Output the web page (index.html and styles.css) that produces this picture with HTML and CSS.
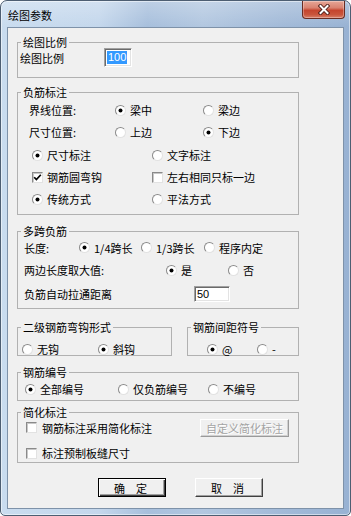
FILE: index.html
```html
<!DOCTYPE html>
<html lang="zh-CN">
<head>
<meta charset="utf-8">
<title>绘图参数</title>
<link rel="stylesheet" href="styles.css">
</head>
<body>
<div class="window">
  <div class="titlebar">
    <span class="title">绘图参数</span>
    <span class="close" aria-label="关闭">
      <svg width="12" height="11" viewBox="0 0 12 11"><path d="M2.5 2 L9.5 9 M9.5 2 L2.5 9" fill="none" stroke="#4a1c17" stroke-width="3.8" stroke-linecap="square"/><path d="M2.5 2 L9.5 9 M9.5 2 L2.5 9" fill="none" stroke="#ffffff" stroke-width="2" stroke-linecap="square"/></svg>
    </span>
  </div>
  <div class="client">
    <fieldset class="grp g1">
      <legend>绘图比例</legend>
      <div class="row cols-scale">
        <span>绘图比例</span>
        <span class="edit e-scale"><span class="sel">100</span></span>
      </div>
    </fieldset>

    <fieldset class="grp g2">
      <legend>负筋标注</legend>
      <div class="row cols-pos">
        <span>界线位置:</span>
        <label class="opt"><i class="radio on"></i>梁中</label>
        <label class="opt"><i class="radio"></i>梁边</label>
      </div>
      <div class="row cols-pos">
        <span>尺寸位置:</span>
        <label class="opt"><i class="radio"></i>上边</label>
        <label class="opt"><i class="radio on"></i>下边</label>
      </div>
      <div class="row cols-two first-two">
        <label class="opt"><i class="radio on"></i>尺寸标注</label>
        <label class="opt"><i class="radio"></i>文字标注</label>
      </div>
      <div class="row cols-two">
        <label class="opt"><i class="check"><svg width="9" height="9" viewBox="0 0 9 9"><path d="M1.2 4.2 L3.4 6.6 L7.8 1.8" fill="none" stroke="#000" stroke-width="1.7"/></svg></i>钢筋圆弯钩</label>
        <label class="opt"><i class="check"></i>左右相同只标一边</label>
      </div>
      <div class="row cols-two">
        <label class="opt"><i class="radio on"></i>传统方式</label>
        <label class="opt"><i class="radio"></i>平法方式</label>
      </div>
    </fieldset>

    <fieldset class="grp g3">
      <legend>多跨负筋</legend>
      <div class="row cols-len">
        <span>长度:</span>
        <label class="opt"><i class="radio on"></i>1/4跨长</label>
        <label class="opt"><i class="radio"></i>1/3跨长</label>
        <label class="opt"><i class="radio"></i>程序内定</label>
      </div>
      <div class="row cols-max">
        <span>两边长度取大值:</span>
        <label class="opt"><i class="radio on"></i>是</label>
        <label class="opt"><i class="radio"></i>否</label>
      </div>
      <div class="row cols-dist">
        <span>负筋自动拉通距离</span>
        <span class="edit e-dist">50</span>
      </div>
    </fieldset>

    <div class="pair">
      <fieldset class="grp g4a">
        <legend>二级钢筋弯钩形式</legend>
        <div class="row cols-hook">
          <label class="opt"><i class="radio"></i>无钩</label>
          <label class="opt"><i class="radio on"></i>斜钩</label>
        </div>
      </fieldset>
      <fieldset class="grp g4b">
        <legend>钢筋间距符号</legend>
        <div class="row cols-sym">
          <label class="opt"><i class="radio on"></i>@</label>
          <label class="opt"><i class="radio"></i>-</label>
        </div>
      </fieldset>
    </div>

    <fieldset class="grp g5">
      <legend>钢筋编号</legend>
      <div class="row cols-num">
        <label class="opt"><i class="radio on"></i>全部编号</label>
        <label class="opt"><i class="radio"></i>仅负筋编号</label>
        <label class="opt"><i class="radio"></i>不编号</label>
      </div>
    </fieldset>

    <fieldset class="grp g6">
      <legend>简化标注</legend>
      <div class="row cols-simp">
        <label class="opt opt-c"><i class="check"></i>钢筋标注采用简化标注</label>
        <span class="btn disabled">自定义简化标注</span>
      </div>
      <div class="row row-plate">
        <label class="opt opt-c"><i class="check"></i>标注预制板缝尺寸</label>
      </div>
    </fieldset>

    <div class="btns">
      <span class="btn default"><span>确</span><span>定</span></span>
      <span class="btn"><span>取</span><span>消</span></span>
    </div>
  </div>
</div>
</body>
</html>
```

FILE: styles.css
```css
* { box-sizing: border-box; }
html, body { margin: 0; padding: 0; }
body {
  width: 351px;
  height: 516px;
  overflow: hidden;
  background: #ffffff;
  font-family: "Noto Sans CJK SC", "Noto Sans", sans-serif;
  font-size: 11px;
  color: #000;
}

.window {
  width: 351px;
  height: 516px;
  border: 1px solid #4d5e72;
  border-radius: 7px 7px 5px 5px;
  background:
    linear-gradient(to bottom, rgba(255,255,255,0.25) 0px, rgba(255,255,255,0) 26px),
    linear-gradient(to right, #c9dcef 0%, #c4d7ec 28%, #a7bfdc 42%, #b2c7e0 58%, #a2bad8 80%, #98b2d3 100%);
  box-shadow: inset 0 0 0 1px rgba(255,255,255,0.5);
  padding: 0 6px 6px;
  display: flex;
  flex-direction: column;
}

.titlebar {
  height: 26px;
  display: flex;
  align-items: flex-start;
  padding-left: 1px;
}
.title {
  line-height: 14px;
  margin-top: 7px;
  font-size: 11px;
  color: #000;
}
.close {
  margin-left: auto;
  margin-right: -1px;
  width: 43px;
  height: 18px;
  border: 1px solid #6a2c22;
  border-top: none;
  border-radius: 0 0 4px 4px;
  background: linear-gradient(to bottom, #e6a797 0%, #d98270 40%, #c5452e 55%, #c9553c 80%, #d9806a 100%);
  box-shadow: inset 0 0 0 1px rgba(255,255,255,0.3);
  display: flex;
  align-items: center;
  justify-content: center;
}

.client {
  flex: 1;
  background: #f0f0f0;
  border: 1px solid #7e92a9;
  padding: 0 0 0 9px;
}

.grp {
  margin: 0;
  padding: 0;
  min-width: 0;
  border: 1px solid #b1b1b1;
  border-radius: 0;
  width: 282px;
}
.grp legend {
  margin-left: 3px;
  padding: 0 2px;
  font-size: 11px;
  line-height: 12px;
}

.row {
  display: grid;
  align-items: center;
  white-space: nowrap;
}
.opt {
  display: flex;
  align-items: center;
}

.radio, .check {
  display: inline-flex;
  align-items: center;
  justify-content: center;
  flex: none;
  width: 11px;
  height: 11px;
  background: #fff;
  border: 1px solid;
  border-color: #8a8a8a #e2e2e2 #e2e2e2 #8a8a8a;
  margin-right: 4px;
}
.radio { border-radius: 50%; }
.radio.on::after {
  content: "";
  width: 3px;
  height: 3px;
  border-radius: 50%;
  background: #000;
  box-shadow: 0 0 0 0.5px #000;
}
.check {
  box-shadow: inset 1px 1px 0 #c8c8c8;
}

.edit {
  display: flex;
  align-items: center;
  background: #fff;
  border: 1px solid;
  border-color: #a0a0a0 #ffffff #ffffff #a0a0a0;
  box-shadow: inset 1px 1px 0 #6a6a6a, inset -1px -1px 0 #e3e3e3;
  font-family: "Liberation Sans", Arial, sans-serif;
  font-size: 11px;
  padding-left: 2px;
}
.e-scale { width: 28px; height: 19px; }
.sel { background: #3399ff; color: #fff; line-height: 13px; padding: 0 1px; }
.e-dist { width: 36px; height: 16px; }

/* group 1 */
.g1 { margin-top: 8px; }
.cols-scale { grid-template-columns: 84px 28px; height: 19px; padding-left: 2px; }
.g1 .row { margin-bottom: 10px; }

/* group 2 */
.g2 { margin-top: 8px; padding-top: 1px; padding-bottom: 4px; }
.g2 .row { height: 22px; }
.cols-pos { grid-template-columns: 86px 88px auto; padding-left: 11px; }
.cols-two { grid-template-columns: 120px auto; padding-left: 14px; }
.first-two { margin-top: 1px; }

/* group 3 */
.g3 { margin-top: 10px; padding-bottom: 2px; }
.cols-len { grid-template-columns: 55px 62px 63px auto; padding-left: 6px; height: 21px; }
.cols-max { grid-template-columns: 142px 62px auto; padding-left: 6px; height: 24px; }
.cols-dist { grid-template-columns: 170px 36px; padding-left: 6px; height: 24px; }

/* pair */
.pair { display: flex; margin-top: 12px; width: 282px; }
.g4a { width: 155px; }
.g4b { width: 112px; margin-left: 15px; }
.pair .row { height: 14px; margin-top: 8px; }
.cols-hook { grid-template-columns: 76px auto; padding-left: 4px; }
.cols-sym { grid-template-columns: 50px auto; padding-left: 19px; }

/* group 5 */
.g5 { margin-top: 10px; padding-top: 3px; padding-bottom: 5px; }
.g5 .row { height: 14px; }
.cols-num { grid-template-columns: 93px 90px auto; padding-left: 7px; }

/* group 6 */
.g6 { margin-top: 5px; padding-bottom: 3px; }
.cols-simp { grid-template-columns: 174px 89px; height: 19px; padding-left: 8px; }
.row-plate { height: 14px; margin-top: 8px; padding-left: 8px; }
.opt-c .check { margin-right: 5px; }

/* buttons */
.btn {
  display: inline-flex;
  align-items: center;
  justify-content: center;
  background: #f0f0f0;
  border: 1px solid;
  border-color: #ffffff #404040 #404040 #ffffff;
  box-shadow: inset -1px -1px 0 #a0a0a0;
  font-size: 11px;
}
.btn.disabled {
  height: 18px;
  width: 89px;
  margin-top: 1px;
  color: #a3a3a3;
  border-color: #ffffff #9a9a9a #9a9a9a #ffffff;
  box-shadow: inset -1px -1px 0 #d0d0d0;
  text-shadow: 1px 1px 0 #ffffff;
}
.btns {
  display: flex;
  gap: 29px;
  margin: 15px 0 0 81px;
}
.btns .btn {
  width: 68px;
  height: 19px;
  gap: 11px;
  padding-right: 3px;
}
.btn.default {
  border: 1px solid #000;
  box-shadow: inset 1px 1px 0 #ffffff, inset -1px -1px 0 #404040, inset -2px -2px 0 #a0a0a0;
}
```
